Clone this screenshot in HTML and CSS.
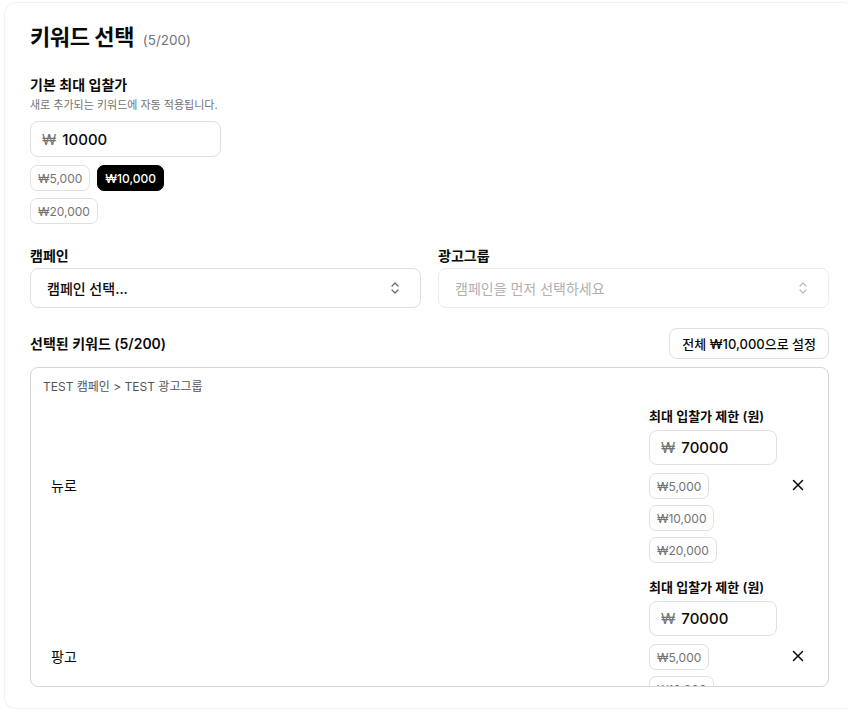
FILE: index.html
```html
<!DOCTYPE html>
<html lang="ko">
<head>
  <meta charset="UTF-8">
  <meta name="viewport" content="width=device-width, initial-scale=1.0">
  <title>키워드 선택</title>
  <link rel="stylesheet" href="styles.css">
</head>
<body>
  <div class="dialog">
    <h1 class="title">키워드 선택 <span class="count">(5/200)</span></h1>

    <div class="section">
      <div class="label">기본 최대 입찰가</div>
      <div class="hint">새로 추가되는 키워드에 자동 적용됩니다.</div>
      <div class="bid-box">
        <div class="money-input">
          <span class="won">₩</span>
          <span class="amount">10000</span>
        </div>
        <div class="chips">
          <button class="chip">₩5,000</button>
          <button class="chip active">₩10,000</button>
          <button class="chip">₩20,000</button>
        </div>
      </div>
    </div>

    <div class="selects">
      <div class="field">
        <div class="label">캠페인</div>
        <div class="select">
          <span>캠페인 선택...</span>
          <svg class="updown" width="10" height="14" viewBox="0 0 10 14" fill="none" stroke="currentColor" stroke-width="1.2" stroke-linecap="round" stroke-linejoin="round"><path d="M2 5l3-3 3 3"/><path d="M2 9l3 3 3-3"/></svg>
        </div>
      </div>
      <div class="field">
        <div class="label">광고그룹</div>
        <div class="select disabled">
          <span>캠페인을 먼저 선택하세요</span>
          <svg class="updown" width="10" height="14" viewBox="0 0 10 14" fill="none" stroke="currentColor" stroke-width="1.2" stroke-linecap="round" stroke-linejoin="round"><path d="M2 5l3-3 3 3"/><path d="M2 9l3 3 3-3"/></svg>
        </div>
      </div>
    </div>

    <div class="list-head">
      <div class="label">선택된 키워드 (5/200)</div>
      <button class="outline-btn">전체 ₩10,000으로 설정</button>
    </div>

    <div class="keyword-list">
      <div class="group-title">TEST 캠페인 &gt; TEST 광고그룹</div>

      <div class="kw-row">
        <div class="kw-name">뉴로</div>
        <div class="kw-bid">
          <div class="small-label">최대 입찰가 제한 (원)</div>
          <div class="money-input small">
            <span class="won">₩</span>
            <span class="amount">70000</span>
          </div>
          <div class="chips">
            <button class="chip">₩5,000</button>
            <button class="chip">₩10,000</button>
            <button class="chip">₩20,000</button>
          </div>
        </div>
        <button class="remove">
          <svg width="12" height="12" viewBox="0 0 12 12" fill="none" stroke="currentColor" stroke-width="1.5" stroke-linecap="round"><path d="M1.5 1.5l9 9M10.5 1.5l-9 9"/></svg>
        </button>
      </div>

      <div class="kw-row">
        <div class="kw-name">팡고</div>
        <div class="kw-bid">
          <div class="small-label">최대 입찰가 제한 (원)</div>
          <div class="money-input small">
            <span class="won">₩</span>
            <span class="amount">70000</span>
          </div>
          <div class="chips">
            <button class="chip">₩5,000</button>
            <button class="chip">₩10,000</button>
            <button class="chip">₩20,000</button>
          </div>
        </div>
        <button class="remove">
          <svg width="12" height="12" viewBox="0 0 12 12" fill="none" stroke="currentColor" stroke-width="1.5" stroke-linecap="round"><path d="M1.5 1.5l9 9M10.5 1.5l-9 9"/></svg>
        </button>
      </div>
    </div>
  </div>
</body>
</html>
```

FILE: styles.css
```css
:root {
  --text-color: #0a0a0a;
  --muted: #737373;
  --border-color: #e0e0e0;
  --border-soft: #ececec;
}

* {
  box-sizing: border-box;
  margin: 0;
  padding: 0;
  font-family: Inter, 'Noto Sans CJK KR', sans-serif;
}

body {
  background-color: white;
  color: var(--text-color);
  overflow: hidden;
}

.dialog {
  width: 852px;
  height: 707px;
  margin: 2px 0 0 4px;
  padding: 18px 20px 0 25px;
  border: 1px solid #f1f1f1;
  border-radius: 12px;
  box-shadow: 0 1px 3px rgba(0, 0, 0, 0.04);
  overflow: hidden;
}

.title {
  font-size: 22px;
  font-weight: 700;
  line-height: 32px;
  letter-spacing: -0.4px;
}

.title .count {
  font-size: 13.5px;
  font-weight: 400;
  color: var(--muted);
  margin-left: 4px;
  letter-spacing: 0;
}

.section {
  margin-top: 19px;
}

.label {
  font-size: 14px;
  font-weight: 600;
  line-height: 20px;
}

.hint {
  font-size: 11px;
  color: var(--muted);
  line-height: 16px;
  margin-top: 2px;
}

.bid-box {
  width: 191px;
  margin-top: 8px;
}

.money-input {
  display: flex;
  align-items: center;
  gap: 6px;
  height: 36px;
  padding: 0 11px;
  border: 1px solid var(--border-color);
  border-radius: 8px;
}

.money-input .won {
  color: var(--muted);
  font-size: 15px;
}

.money-input .amount {
  font-size: 15px;
  font-weight: 500;
}

.chips {
  display: flex;
  flex-wrap: wrap;
  gap: 7px 7px;
  margin-top: 8px;
}

.chip {
  height: 26px;
  padding: 0 7px;
  font-size: 12px;
  color: var(--muted);
  background: white;
  border: 1px solid var(--border-color);
  border-radius: 7px;
}

.chip.active {
  background: #000;
  border-color: #000;
  color: white;
  font-weight: 500;
}

.selects {
  display: grid;
  grid-template-columns: 1fr 1fr;
  gap: 17px;
  margin-top: 22px;
  width: 799px;
}

.field .select {
  margin-top: 2px;
}

.select {
  display: flex;
  align-items: center;
  justify-content: space-between;
  height: 40px;
  padding: 0 20px 0 16px;
  border: 1px solid var(--border-color);
  border-radius: 8px;
  font-size: 14px;
  font-weight: 500;
}

.select .updown {
  color: #666;
}

.select.disabled {
  border-color: var(--border-soft);
  color: #b0b0b0;
  font-weight: 400;
}

.select.disabled .updown {
  color: #bbb;
}

.list-head {
  display: flex;
  align-items: center;
  justify-content: space-between;
  width: 799px;
  margin-top: 20px;
}

.outline-btn {
  height: 31px;
  padding: 0 12px;
  background: white;
  border: 1px solid var(--border-color);
  border-radius: 8px;
  font-size: 13px;
  font-weight: 500;
  color: var(--text-color);
}

.keyword-list {
  width: 799px;
  height: 320px;
  margin-top: 8px;
  padding: 11px 12px;
  border: 1px solid #d6d6d6;
  border-radius: 8px;
  overflow: hidden;
}

.group-title {
  font-size: 12px;
  color: #555;
  line-height: 16px;
  margin-bottom: 5px;
}

.kw-row {
  display: flex;
  align-items: center;
  padding: 7px 6px 8px 8px;
}

.kw-name {
  flex: 1;
  font-size: 14px;
}

.kw-bid {
  width: 128px;
}

.small-label {
  font-size: 13px;
  font-weight: 600;
  line-height: 18px;
  margin-bottom: 5px;
}

.money-input.small {
  height: 35px;
}

.kw-bid .chips {
  gap: 6px;
  margin-top: 8px;
}

.remove {
  display: flex;
  align-items: center;
  justify-content: center;
  width: 24px;
  height: 24px;
  margin-left: 9px;
  background: none;
  border: none;
  color: var(--text-color);
}
```
